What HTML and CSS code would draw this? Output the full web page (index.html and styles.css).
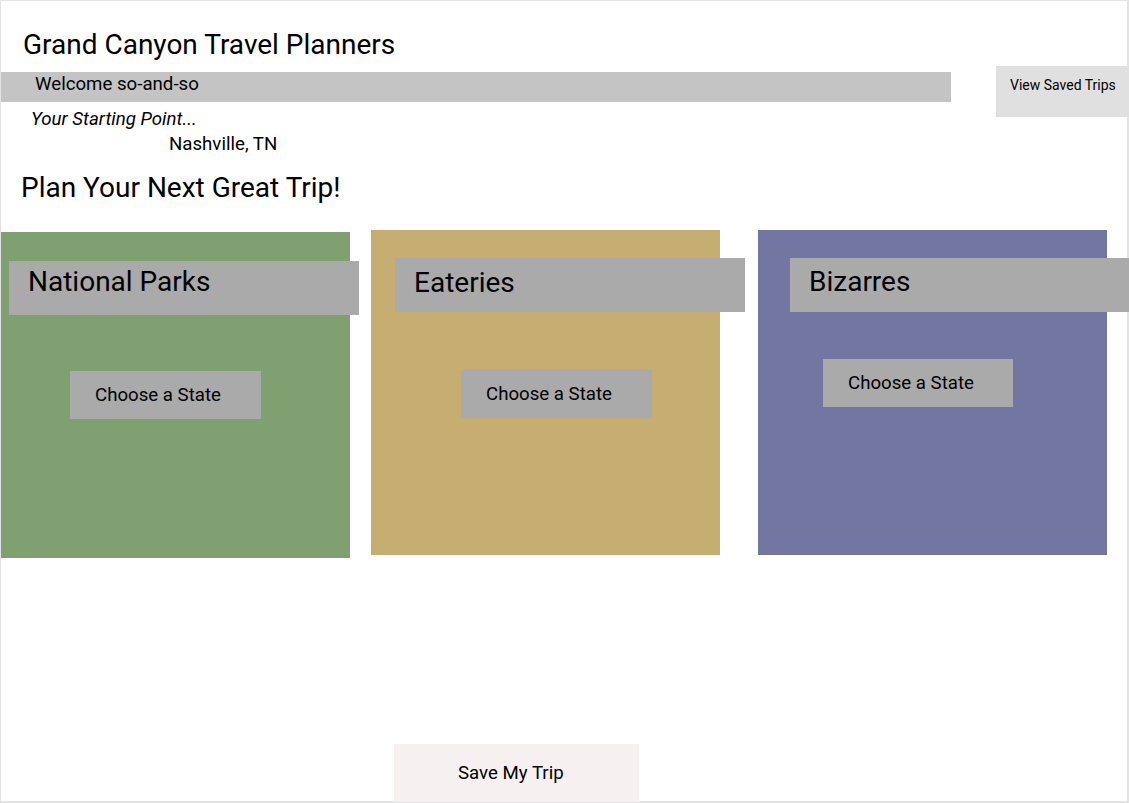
FILE: index.html
```html
<!DOCTYPE html>
<html lang="en">
<head>
<meta charset="utf-8">
<title>Grand Canyon Travel Planners</title>
<link rel="stylesheet" href="styles.css">
</head>
<body>
<div class="frame">
  <h1 class="title">Grand Canyon Travel Planners</h1>
  <div class="top-row">
    <div class="user-col">
      <div class="welcome-bar">Welcome so-and-so</div>
      <p class="start-label">Your Starting Point...</p>
      <p class="start-city">Nashville, TN</p>
    </div>
    <button class="saved-btn">View Saved Trips</button>
  </div>
  <h2 class="plan">Plan Your Next Great Trip!</h2>
  <div class="cards">
    <section class="card card-parks">
      <div class="card-head">National Parks</div>
      <button class="state-btn">Choose a State</button>
    </section>
    <section class="card card-eats">
      <div class="card-head">Eateries</div>
      <button class="state-btn">Choose a State</button>
    </section>
    <section class="card card-bizarre">
      <div class="card-head">Bizarres</div>
      <button class="state-btn">Choose a State</button>
    </section>
  </div>
  <div class="save-row">
    <button class="save-btn">Save My Trip</button>
  </div>
</div>
</body>
</html>
```

FILE: styles.css
```css
html, body {
  margin: 0;
  padding: 0;
  overflow: hidden;
  background: #ffffff;
}

body {
  font-family: Roboto, "Liberation Sans", sans-serif;
  color: #000;
}

.frame {
  width: 1129px;
  height: 803px;
  box-sizing: border-box;
  border: 1px solid #e3e3e3;
  border-right-width: 2px;
  border-bottom-width: 2px;
}

button {
  font-family: inherit;
  border: none;
  margin: 0;
  cursor: pointer;
  color: #000;
}

.title {
  margin: 29px 0 0 22px;
  font-size: 28px;
  line-height: 30px;
  font-weight: 400;
}

.top-row {
  display: flex;
  align-items: flex-start;
  margin-top: 6px;
}

.user-col {
  width: 950px;
  flex-shrink: 0;
}

.welcome-bar {
  margin-top: 6px;
  height: 30px;
  background: #c4c4c4;
  font-size: 18.67px;
  line-height: 24px;
  padding-left: 34px;
  box-sizing: border-box;
}

.start-label {
  margin: 7px 0 0 30px;
  font-size: 18.67px;
  line-height: 20px;
  font-style: italic;
}

.start-city {
  margin: 5px 0 0 168px;
  font-size: 18.67px;
  line-height: 20px;
}

.saved-btn {
  flex-shrink: 0;
  margin-left: 45px;
  width: 133px;
  height: 51px;
  background: #e0e0e0;
  font-size: 14px;
  line-height: 16px;
  text-align: left;
  padding: 11px 0 0 14px;
  display: flex;
  align-items: flex-start;
  box-sizing: border-box;
}

.plan {
  margin: 19px 0 0 20px;
  font-size: 28px;
  line-height: 30px;
  font-weight: 400;
}

.cards {
  display: flex;
  align-items: flex-start;
  margin-top: 27px;
}

.card {
  flex-shrink: 0;
  width: 349px;
  height: 326px;
  box-sizing: border-box;
}

.card-head {
  width: 350px;
  height: 54px;
  background: #aaaaaa;
  font-size: 28px;
  line-height: 30px;
  padding: 6px 0 0 19px;
  box-sizing: border-box;
}

.state-btn {
  display: block;
  width: 191px;
  height: 48px;
  background: #aaaaaa;
  font-size: 18.67px;
  text-align: left;
  padding: 0 0 0 25px;
  box-sizing: border-box;
}

.card-parks {
  background: #7fa171;
  margin-top: 2px;
}
.card-parks .card-head { margin: 29px 0 0 8px; }
.card-parks .state-btn { margin: 56px 0 0 69px; }

.card-eats {
  background: #c6ae72;
  margin-left: 21px;
  height: 325px;
}
.card-eats .card-head { margin: 28px 0 0 24px; padding-top: 10px; }
.card-eats .state-btn { margin: 57px 0 0 90px; height: 49px; }

.card-bizarre {
  background: #7276a1;
  margin-left: 38px;
  height: 325px;
}
.card-bizarre .card-head { margin: 28px 0 0 32px; width: 339px; padding-top: 9px; }
.card-bizarre .state-btn { margin: 47px 0 0 65px; width: 190px; }

.save-row {
  margin-top: 186px;
  padding-left: 393px;
}

.save-btn {
  display: block;
  width: 245px;
  height: 58px;
  background: #f6f0f0;
  font-size: 18.67px;
  text-align: left;
  padding: 0 0 0 64px;
  box-sizing: border-box;
}
```
